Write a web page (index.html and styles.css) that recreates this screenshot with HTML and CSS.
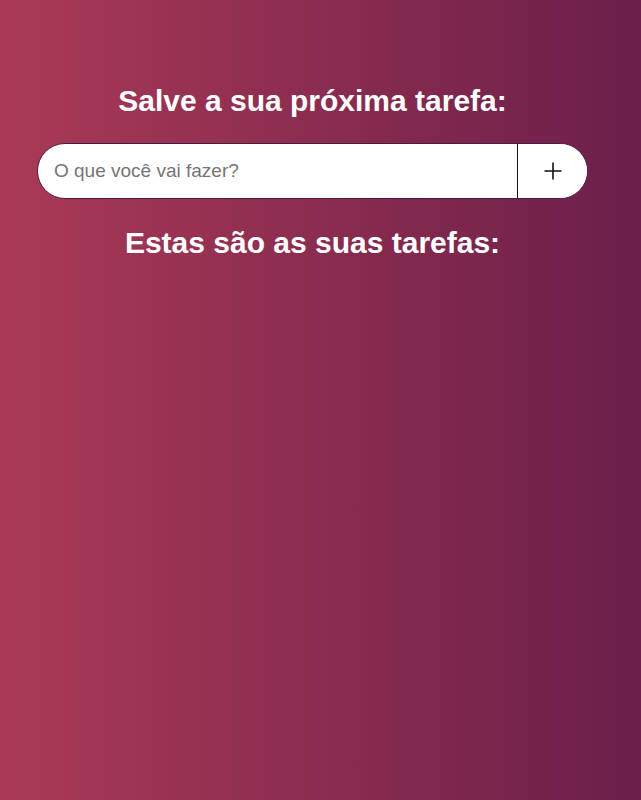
FILE: index.html
```html
<!DOCTYPE html>
<html lang="pt-BR">
<head>
<meta charset="utf-8">
<title>Tarefas</title>
<link rel="stylesheet" href="styles.css">
</head>
<body>
<main class="app">
  <h1 class="title">Salve a sua próxima tarefa:</h1>
  <form class="task-form">
    <input class="task-input" type="text" placeholder="O que você vai fazer?">
    <button class="task-add" type="button" aria-label="Adicionar">
      <svg width="18" height="18" viewBox="0 0 18 18"><path d="M9 0.5v17M0.5 9h17" stroke="#111" stroke-width="1.6" fill="none"/></svg>
    </button>
  </form>
  <h2 class="title">Estas são as suas tarefas:</h2>
</main>
</body>
</html>
```
FILE: styles.css
```css
html, body {
  margin: 0;
  height: 100%;
}
body {
  background: linear-gradient(to right, #aa3a56, #6b1f4a);
  font-family: "Liberation Sans", Arial, sans-serif;
  color: #fff;
}
.app {
  width: 551px;
  margin-left: 37px;
  padding-top: 80px;
}
.title {
  margin: 0;
  text-align: center;
  font-size: 30px;
  font-weight: bold;
  line-height: 42px;
}
.task-form {
  display: flex;
  height: 56px;
  margin: 21px 0 23px;
  background: #fff;
  border: 1px solid #4a1a40;
  border-radius: 28px;
  overflow: hidden;
  box-sizing: border-box;
}
.task-input {
  flex: 1;
  border: none;
  outline: none;
  padding: 0 16px;
  font-family: "Liberation Sans", Arial, sans-serif;
  font-size: 19px;
  color: #333;
  background: transparent;
}
.task-input::placeholder {
  color: #757575;
}
.task-add {
  width: 70px;
  border: none;
  border-left: 1px solid #2a0a28;
  background: #fff;
  display: flex;
  align-items: center;
  justify-content: center;
  padding: 0;
}
```
